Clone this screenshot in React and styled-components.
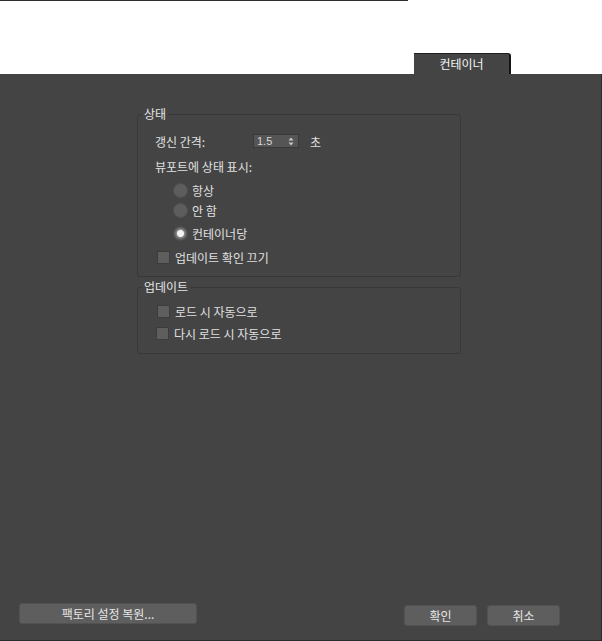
import React from 'react'
import styled, { createGlobalStyle } from 'styled-components'

const GlobalStyle = createGlobalStyle`
    html, body {
        margin: 0;
        padding: 0;
        background: #ffffff;
    }
    body {
        font-family: "Noto Sans CJK KR", "Noto Sans", sans-serif;
        font-size: 12px;
    }
`

function Radio({ label, checked, top }) {
    return (
        <RadioRow top={top}>
            <RadioDot checked={checked} />
            <span>{label}</span>
        </RadioRow>
    )
}

function Check({ label, top, left }) {
    return (
        <CheckRow top={top} left={left}>
            <CheckBox />
            <span>{label}</span>
        </CheckRow>
    )
}

export default function App() {
    return (
        <>
            <GlobalStyle />
            <Header>
                <TopRule />
                <Tab>컨테이너</Tab>
            </Header>
            <Panel>
                <Groups>
                    <Group first>
                        <Legend>상태</Legend>
                        <Inner>
                            <FieldRow>
                                <FieldLabel>갱신 간격:</FieldLabel>
                                <Spinner>
                                    <span>1.5</span>
                                    <Arrows>
                                        <svg width="6" height="9" viewBox="0 0 6 9">
                                            <path d="M3 0.5 L5.5 3.5 H0.5 Z" fill="#c8c8c8" />
                                            <path d="M3 8.5 L5.5 5.5 H0.5 Z" fill="#c8c8c8" />
                                        </svg>
                                    </Arrows>
                                </Spinner>
                                <Unit>초</Unit>
                            </FieldRow>
                            <SubTitle>뷰포트에 상태 표시:</SubTitle>
                            <Radio label="항상" top={7} />
                            <Radio label="안 함" top={4} />
                            <Radio label="컨테이너당" top={7} checked />
                            <Check label="업데이트 확인 끄기" top={8} left={2} />
                        </Inner>
                    </Group>
                    <Group>
                        <Legend>업데이트</Legend>
                        <Inner second>
                            <Check label="로드 시 자동으로" top={0} left={2} />
                            <Check label="다시 로드 시 자동으로" top={6} left={1} />
                        </Inner>
                    </Group>
                </Groups>
                <Footer>
                    <Button wide>팩토리 설정 복원...</Button>
                    <RightButtons>
                        <Button>확인</Button>
                        <Button>취소</Button>
                    </RightButtons>
                </Footer>
            </Panel>
        </>
    )
}

const Header = styled.div`
    height: 74px;
    display: flex;
    flex-direction: column;
`

const TopRule = styled.div`
    width: 408px;
    height: 1px;
    background: #2e2e2e;
`

const Tab = styled.div`
    margin: 52px 0 0 414px;
    width: 95px;
    height: 20px;
    background: #444444;
    border-top: 1px solid #1e1e1e;
    border-right: 2px solid #151515;
    border-top-right-radius: 3px;
    color: #f6f6f6;
    font-size: 12px;
    line-height: 19px;
    text-align: center;
`

const Panel = styled.div`
    height: 567px;
    box-sizing: border-box;
    background: #444444;
    border-right: 1px solid #2c2c2c;
    border-bottom: 1px solid #2c2c2c;
    display: flex;
    flex-direction: column;
    color: #e0e0e0;
`

const Groups = styled.div`
    margin: 33px 0 0 137px;
    width: 324px;
    display: flex;
    flex-direction: column;
`

const Group = styled.fieldset`
    margin: ${p => (p.first ? '0' : '3px 0 0 0')};
    padding: 0;
    min-width: 0;
    border: 1px solid #383838;
    border-radius: 3px;
`

const Legend = styled.legend`
    margin-left: 4px;
    padding: 0 2px;
    font-size: 12px;
    line-height: 14px;
    color: #e4e4e4;
`

const Inner = styled.div`
    padding: ${p => (p.second ? '9px 0 12px 17px' : '12px 0 11px 17px')};
    display: flex;
    flex-direction: column;
`

const FieldRow = styled.div`
    height: 16px;
    display: flex;
    align-items: center;
`

const FieldLabel = styled.span`
    width: 98px;
`

const Spinner = styled.div`
    width: 46px;
    height: 14px;
    box-sizing: border-box;
    background: #555555;
    border: 1px solid #393939;
    display: flex;
    align-items: center;
    justify-content: space-between;
    padding: 0 4px 0 3px;
    font-family: "Liberation Sans", "Noto Sans", sans-serif;
    font-size: 11px;
    color: #d8d8d8;
`

const Arrows = styled.span`
    display: flex;
    align-items: center;
`

const Unit = styled.span`
    margin-left: 11px;
`

const SubTitle = styled.div`
    margin-top: 10px;
    height: 16px;
    line-height: 16px;
`

const RadioRow = styled.div`
    margin: ${p => p.top}px 0 0 18px;
    height: 16px;
    display: flex;
    align-items: center;
    gap: 4px;
`

const RadioDot = styled.span`
    width: 13px;
    height: 13px;
    border-radius: 50%;
    background: ${p => (p.checked ? 'radial-gradient(circle, #f4f4f4 0 3px, #8a8a8a 4px, #5c5c5c 6px)' : '#5d5d5d')};
    border: 1px solid #505050;
    flex: none;
`

const CheckRow = styled.div`
    margin: ${p => p.top}px 0 0 ${p => p.left}px;
    height: 16px;
    display: flex;
    align-items: center;
    gap: 5px;
`

const CheckBox = styled.span`
    width: 11px;
    height: 11px;
    background: #5e5e5e;
    border: 1px solid #3c3c3c;
    flex: none;
`

const Footer = styled.div`
    margin-top: auto;
    padding: 0 41px 14px 19px;
    display: flex;
    justify-content: space-between;
    align-items: flex-start;
`

const RightButtons = styled.div`
    margin-top: 2px;
    display: flex;
    gap: 10px;
`

const Button = styled.div`
    width: ${p => (p.wide ? '178px' : '73px')};
    height: 21px;
    box-sizing: border-box;
    background: #5e5e5e;
    border: 1px solid #525252;
    border-radius: 3px;
    color: #e6e6e6;
    font-size: 12px;
    line-height: 19px;
    text-align: center;
`
